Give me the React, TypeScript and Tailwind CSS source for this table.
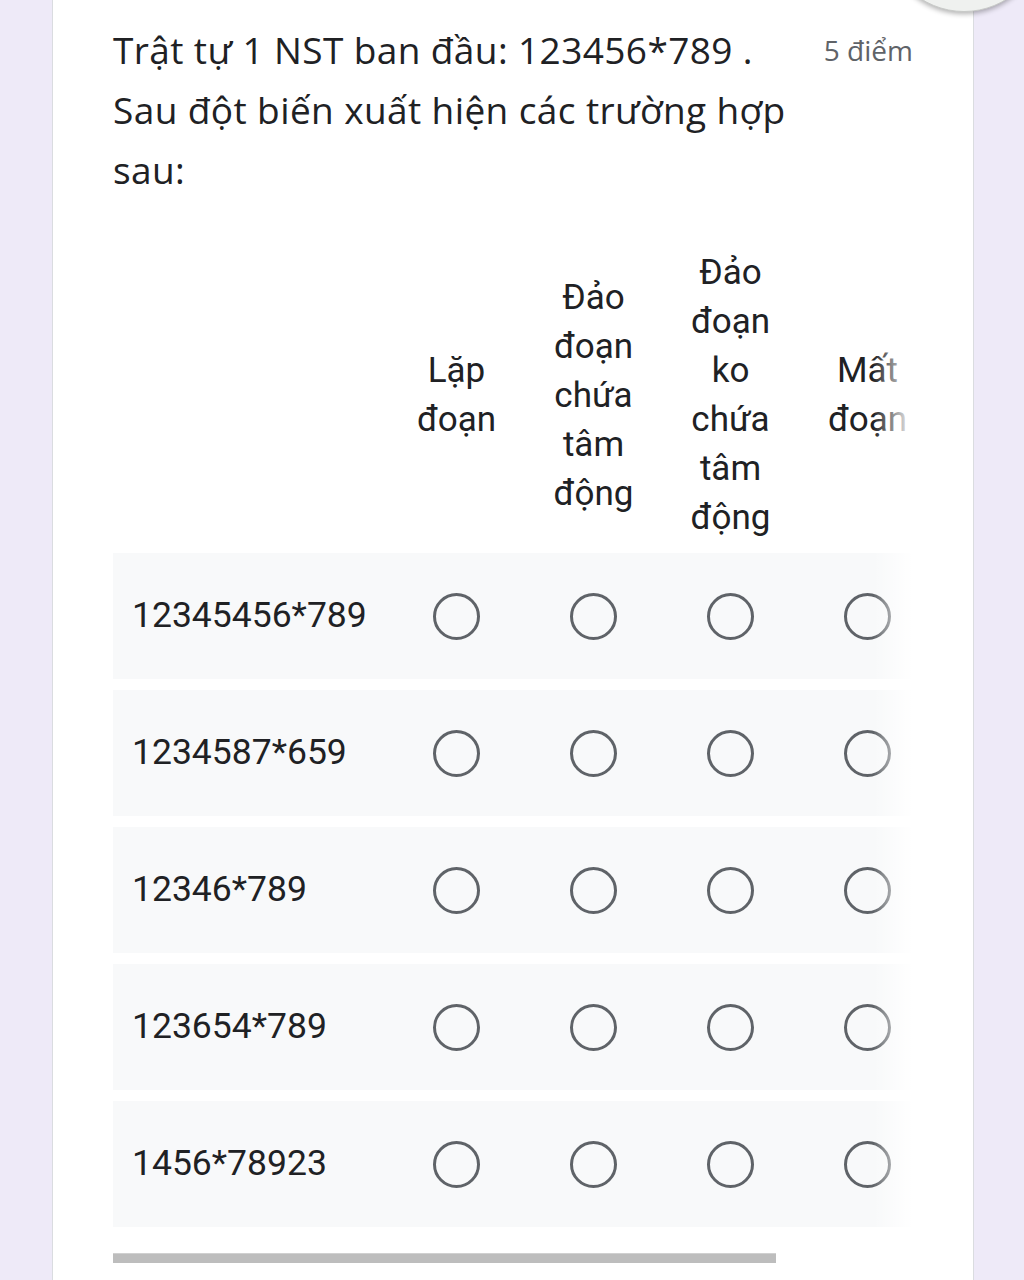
import * as React from "react";

const columns = [
  ["Lặp", "đoạn"],
  ["Đảo", "đoạn", "chứa", "tâm", "động"],
  ["Đảo", "đoạn", "ko", "chứa", "tâm", "động"],
  ["Mất", "đoạn"],
];

const rows = ["12345456*789", "1234587*659", "12346*789", "123654*789", "1456*78923"];

function Radio() {
  return (
    <div className="h-[47px] w-[47px] rounded-full border-[3.5px] border-[#5f6368]" />
  );
}

export default function App() {
  return (
    <div
      className="relative min-h-[1280px] overflow-hidden bg-[#eeeaf8] pl-[52px] pr-[50px]"
      style={{ fontFamily: "Roboto, 'Noto Sans', sans-serif" }}
    >
      {/* floating button peeking in at the top */}
      <div className="absolute left-[884px] top-[-148px] h-[160px] w-[160px] rounded-full border border-[#c8cac8] bg-[#eff1ef] shadow-[0_2px_5px_rgba(0,0,0,0.3)]" />

      <div className="min-h-[1280px] border-x border-[#dadce0] bg-white px-[60px] pt-[20px]">
        <div className="flex items-start justify-between font-['Open_Sans',sans-serif]">
          <div className="text-[37px] leading-[60px] tracking-[0.4px] text-[#202124]">
            <div>Trật tự 1 NST ban đầu: 123456*789 .</div>
            <div>Sau đột biến xuất hiện các trường hợp</div>
            <div>sau:</div>
          </div>
          <div className="text-[28px] leading-[60px] text-[#5f6368]">5 điểm</div>
        </div>

        <div className="relative mt-[37px] w-[800px] overflow-hidden">
          <div className="w-[900px]">
            <div className="flex items-center py-[11px]">
              <div className="w-[275px] shrink-0" />
              {columns.map((words, i) => (
                <div
                  key={i}
                  className="flex w-[137px] shrink-0 flex-col items-center text-[35px] leading-[49px] text-[#202124]"
                >
                  {words.map((w, j) => (
                    <span key={j}>{w}</span>
                  ))}
                </div>
              ))}
            </div>

            <div className="flex flex-col gap-[11px]">
              {rows.map((label) => (
                <div key={label} className="flex h-[126px] items-center bg-[#f8f9fa]">
                  <div className="w-[275px] shrink-0 pl-[19px] text-[35.5px] text-[#202124]">
                    {label}
                  </div>
                  {columns.map((_, i) => (
                    <div key={i} className="flex w-[137px] shrink-0 justify-center">
                      <Radio />
                    </div>
                  ))}
                </div>
              ))}
            </div>
          </div>
          <div className="pointer-events-none absolute bottom-0 right-0 top-0 w-[40px] bg-gradient-to-r from-white/0 to-white" />
        </div>

        <div className="mt-[26px] h-[10px] w-[663px] border-t border-[#d0d0d0] bg-[#bdbdbd]" />
      </div>
    </div>
  );
}
